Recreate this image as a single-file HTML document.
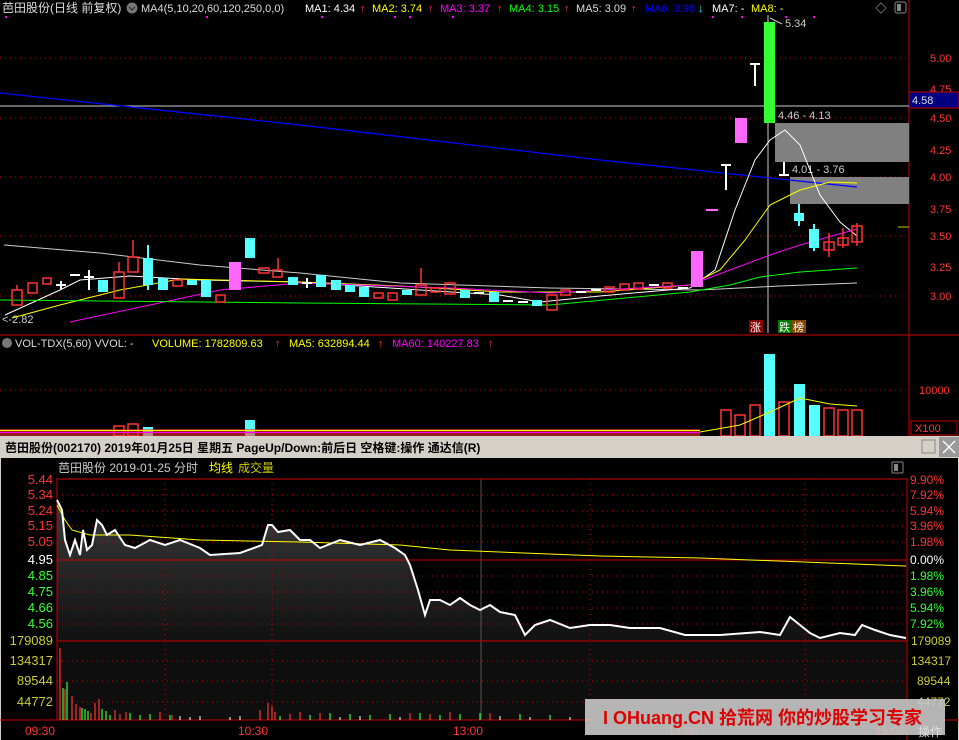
<!DOCTYPE html>
<html><head><meta charset="utf-8"><style>
body{margin:0;background:#000;width:959px;height:740px;overflow:hidden;font-family:"Liberation Sans","Noto Sans CJK SC",sans-serif}
svg{position:absolute;left:0;top:0}
</style></head><body>
<svg width="959" height="740" viewBox="0 0 959 740" font-family="Liberation Sans, Noto Sans CJK SC, sans-serif">
<rect width="959" height="740" fill="#000"/>
<text x="2" y="12" font-size="12" fill="#ddd">芭田股份(日线 前复权)</text>
<circle cx="132" cy="8" r="5.5" fill="#777"/><path d="M129 7l3 3 3-3" stroke="#222" fill="none"/>
<text x="141" y="12" font-size="11" fill="#ddd">MA4(5,10,20,60,120,250,0,0)</text>
<text x="305" y="12" font-size="11" fill="#fff">MA1: 4.34</text><text x="360" y="12" font-size="11" fill="#f33">↑</text>
<text x="372" y="12" font-size="11" fill="#ff0">MA2: 3.74</text><text x="428" y="12" font-size="11" fill="#f33">↑</text>
<text x="440" y="12" font-size="11" fill="#f0f">MA3: 3.37</text><text x="497" y="12" font-size="11" fill="#f33">↑</text>
<text x="509" y="12" font-size="11" fill="#0f0">MA4: 3.15</text><text x="564" y="12" font-size="11" fill="#f33">↑</text>
<text x="576" y="12" font-size="11" fill="#ddd">MA5: 3.09</text><text x="631" y="12" font-size="11" fill="#f33">↑</text>
<text x="645" y="12" font-size="11" fill="#00f">MA6: 3.98</text><text x="698" y="12" font-size="11" fill="#0ff">↓</text>
<text x="712" y="12" font-size="11" fill="#fff">MA7: -</text>
<text x="751" y="12" font-size="11" fill="#ff0">MA8: -</text>
<path d="M881 3l5 5-5 5-5-5z" stroke="#666" fill="none"/><rect x="895" y="2" width="11" height="11" rx="2" stroke="#888" fill="none"/><rect x="897" y="4" width="4" height="7" fill="#888"/>
<g fill="#f0f"><rect x="5" y="16" width="2" height="2"/><rect x="206" y="16" width="2" height="2"/><rect x="321" y="16" width="2" height="2"/><rect x="394" y="16" width="2" height="2"/><rect x="409" y="16" width="2" height="2"/><rect x="452" y="16" width="2" height="2"/><rect x="712" y="16" width="2" height="2"/><rect x="741" y="16" width="2" height="2"/><rect x="785" y="16" width="2" height="2"/><rect x="813" y="16" width="2" height="2"/></g>
<g stroke="#c00" stroke-dasharray="1,4"><line x1="0" y1="58" x2="909" y2="58"/><line x1="0" y1="118" x2="909" y2="118"/><line x1="0" y1="177" x2="909" y2="177"/><line x1="0" y1="236" x2="909" y2="236"/><line x1="0" y1="296" x2="909" y2="296"/><line x1="0" y1="390" x2="909" y2="390"/></g>
<line x1="909" y1="0" x2="909" y2="436" stroke="#c00"/>
<line x1="0" y1="335" x2="959" y2="335" stroke="#c00"/>
<g font-size="11" fill="#f33"><text x="930" y="62">5.00</text><text x="930" y="93">4.75</text><text x="930" y="122">4.50</text><text x="930" y="154">4.25</text><text x="930" y="181">4.00</text><text x="930" y="213">3.75</text><text x="930" y="240">3.50</text><text x="930" y="271">3.25</text><text x="930" y="300">3.00</text></g>
<rect x="909" y="92" width="50" height="16" fill="#000080" stroke="#c00"/><text x="912" y="104" font-size="11" fill="#ddd">4.58</text>
<line x1="0" y1="106" x2="909" y2="106" stroke="#ccc"/>
<line x1="768" y1="15" x2="768" y2="333" stroke="#ccc"/>
<rect x="775" y="123" width="134" height="39" fill="#808080"/><rect x="790" y="177" width="119" height="27" fill="#808080"/>
<text x="778" y="119" font-size="11" fill="#ccc">4.46 - 4.13</text><text x="792" y="173" font-size="11" fill="#ccc">4.01 - 3.76</text>
<text x="785" y="27" font-size="11" fill="#ccc">5.34</text><path d="M770 18l12 6" stroke="#ccc"/>
<text x="2" y="323" font-size="11" fill="#ccc">&lt;-2.82</text>
<polyline fill="none" stroke="#00f" stroke-width="1.3" points="0,93 300,125 600,160 770,178 857,187"/>
<polyline fill="none" stroke="#ccc" points="4,245 100,253 200,265 300,273 400,283 550,288 700,290 780,286 857,283"/>
<polyline fill="none" stroke="#fff" points="5,315 60,290 80,280 130,276 200,280 300,282 420,290 500,295 540,302 600,296 690,288 715,270 735,210 755,160 770,140 785,130 800,145 820,195 840,222 857,236"/>
<polyline fill="none" stroke="#ff0" points="12,318 60,305 120,290 180,279 300,282 400,286 500,292 600,292 690,285 720,270 745,240 770,205 800,190 830,182 857,183"/>
<polyline fill="none" stroke="#f0f" points="70,322 150,305 220,290 300,283 450,288 550,293 690,285 730,270 770,255 800,245 857,229"/>
<polyline fill="none" stroke="#0f0" points="0,300 300,303 550,305 690,292 730,285 760,277 800,272 857,268"/>
<g stroke="#f33" fill="none" stroke-width="1.5">
<rect x="12" y="290" width="10" height="15"/><line x1="17" y1="285" x2="17" y2="290"/>
<rect x="28" y="283" width="9" height="10"/><rect x="43" y="278" width="8" height="6"/>
<rect x="114" y="272" width="10" height="26"/><line x1="119" y1="262" x2="119" y2="272"/>
<rect x="128" y="257" width="10" height="15"/><line x1="133" y1="240" x2="133" y2="257"/>
<rect x="173" y="280" width="9" height="6"/><rect x="216" y="295" width="9" height="7"/>
<rect x="259" y="268" width="10" height="5"/><rect x="273" y="270" width="9" height="7"/><line x1="278" y1="258" x2="278" y2="270"/>
<rect x="374" y="293" width="9" height="5"/><rect x="388" y="293" width="9" height="7"/>
<rect x="416" y="285" width="10" height="10"/><line x1="421" y1="268" x2="421" y2="285"/>
<rect x="431" y="288" width="9" height="4"/><rect x="445" y="283" width="10" height="11"/>
<rect x="547" y="295" width="10" height="15"/><rect x="561" y="290" width="9" height="5"/>
<rect x="605" y="287" width="9" height="5"/><rect x="620" y="284" width="9" height="6"/><rect x="634" y="283" width="9" height="6"/><rect x="663" y="283" width="9" height="5"/>
<rect x="824" y="242" width="10" height="8"/><line x1="829" y1="233" x2="829" y2="257"/>
<rect x="838" y="238" width="10" height="7"/><line x1="843" y1="228" x2="843" y2="248"/>
<rect x="852" y="226" width="10" height="16"/><line x1="857" y1="223" x2="857" y2="246"/>
</g>
<g fill="#5ff"><rect x="98" y="280" width="10" height="12"/><rect x="143" y="258" width="10" height="27"/><rect x="147" y="245" width="2" height="45"/><rect x="158" y="278" width="10" height="12"/><rect x="187" y="280" width="10" height="5"/><rect x="201" y="280" width="10" height="17"/><rect x="245" y="238" width="10" height="20"/><rect x="288" y="277" width="10" height="8"/><rect x="316" y="275" width="10" height="12"/><rect x="331" y="280" width="10" height="10"/><rect x="345" y="285" width="10" height="7"/><rect x="359" y="287" width="10" height="10"/><rect x="402" y="290" width="10" height="5"/><rect x="460" y="290" width="10" height="8"/><rect x="489" y="292" width="10" height="10"/><rect x="532" y="300" width="10" height="6"/><rect x="794" y="213" width="10" height="8"/><rect x="798" y="204" width="2" height="22"/><rect x="809" y="229" width="10" height="19"/><rect x="813" y="224" width="2" height="27"/></g>
<g fill="#f6f"><rect x="229" y="262" width="12" height="28"/><rect x="691" y="251" width="12" height="36"/><rect x="735" y="118" width="12" height="25"/><rect x="706" y="209" width="12" height="2"/></g>
<g stroke="#fff" stroke-width="2"><path d="M56 285h10M61 281v8M70 275h10M84 277h10M89 270v20M302 283h10M307 278v10M474 293h10M503 301h10M518 302h10M576 292h10M591 290h10M649 285h10M678 288h10M721 165h10M726 165v25M750 64h10M755 64v22M779 175h10M784 162v13"/></g>
<rect x="764" y="22" width="11" height="101" fill="#3f3"/>
<rect x="749" y="320" width="14" height="13" fill="#800"/><text x="750" y="331" font-size="11" fill="#fff">涨</text>
<rect x="778" y="320" width="14" height="13" fill="#070"/><text x="779" y="331" font-size="11" fill="#fff">跌</text>
<rect x="792" y="320" width="14" height="13" fill="#840"/><text x="793" y="331" font-size="11" fill="#fff">榜</text>
<line x1="898" y1="227" x2="909" y2="227" stroke="#cc0"/>
<circle cx="7" cy="343" r="5" fill="#777"/>
<text x="15" y="347" font-size="11" fill="#ddd">VOL-TDX(5,60)  VVOL: -</text>
<text x="152" y="347" font-size="11" fill="#ff0">VOLUME: 1782809.63</text><text x="275" y="347" font-size="11" fill="#f33">↑</text>
<text x="289" y="347" font-size="11" fill="#ff0">MA5: 632894.44</text><text x="378" y="347" font-size="11" fill="#f33">↑</text>
<text x="392" y="347" font-size="11" fill="#f0f">MA60: 140227.83</text><text x="488" y="347" font-size="11" fill="#f33">↑</text>
<text x="919" y="394" font-size="11" fill="#f33">10000</text>
<rect x="911" y="421" width="46" height="14" fill="none" stroke="#c00"/><text x="915" y="432" font-size="11" fill="#f33">X100</text>
<g fill="#5ff"><rect x="764" y="354" width="11" height="82"/><rect x="794" y="384" width="11" height="52"/><rect x="809" y="405" width="11" height="31"/><rect x="245" y="420" width="10" height="16"/><rect x="143" y="427" width="10" height="9"/></g>
<g stroke="#f33" fill="none" stroke-width="1.5"><rect x="721" y="410" width="10" height="26"/><rect x="735" y="415" width="10" height="21"/><rect x="750" y="405" width="10" height="31"/><rect x="779" y="402" width="10" height="34"/><rect x="824" y="408" width="10" height="28"/><rect x="838" y="410" width="10" height="26"/><rect x="852" y="410" width="10" height="26"/><rect x="114" y="426" width="10" height="10"/><rect x="128" y="424" width="10" height="12"/></g>
<rect x="0" y="429" width="700" height="7" fill="#f33" opacity=".6"/>
<rect x="0" y="430" width="700" height="1" fill="#ff0"/><rect x="0" y="432" width="700" height="1" fill="#f0f"/>
<polyline fill="none" stroke="#ff0" points="700,432 740,425 770,412 800,398 830,404 857,406"/>
<rect x="0" y="436" width="959" height="304" fill="#d4d0c8"/>
<text x="5" y="452" font-size="12" font-weight="bold" fill="#000">芭田股份(002170)  2019年01月25日  星期五  PageUp/Down:前后日  空格键:操作  通达信(R)</text>
<rect x="922" y="440" width="13" height="13" fill="none" stroke="#888"/>
<rect x="939" y="437" width="20" height="20" fill="#999"/><path d="M943 441l12 12M955 441l-12 12" stroke="#fff" stroke-width="1.3"/>
<rect x="1" y="458" width="957" height="282" fill="#000"/>
<text x="58" y="472" font-size="12" fill="#ccc">芭田股份   2019-01-25 分时</text><text x="209" y="472" font-size="12" fill="#ff0">均线</text><text x="238" y="472" font-size="12" fill="#cc0">成交量</text>
<rect x="892" y="462" width="11" height="11" rx="1" fill="none" stroke="#888"/><rect x="894" y="464" width="4" height="7" fill="#888"/>
<defs><linearGradient id="g" x1="0" y1="0" x2="0" y2="1"><stop offset="0" stop-color="#3a3a3a"/><stop offset="1" stop-color="#111"/></linearGradient></defs>
<rect x="57" y="641" width="850" height="79" fill="#0e0e0e"/>
<polygon fill="url(#g)" points="57,500 62,510 65,540 70,555 75,540 80,555 83,530 87,550 92,545 97,520 102,525 107,535 115,530 125,545 135,548 150,540 165,545 180,540 200,548 210,555 240,553 262,545 268,525 272,525 278,532 290,530 300,540 310,540 320,548 340,540 360,545 380,540 395,548 405,555 410,565 418,590 425,615 430,600 440,600 450,605 460,598 470,605 480,610 490,605 500,612 515,615 525,635 535,625 550,620 570,628 590,625 610,625 630,628 660,628 685,635 720,635 760,632 780,635 790,617 800,625 810,633 820,638 840,633 855,635 862,625 875,630 890,635 906,638 906,641 57,641"/>
<g stroke="#c00" stroke-dasharray="1,4"><line x1="57" y1="495" x2="907" y2="495"/><line x1="57" y1="511" x2="907" y2="511"/><line x1="57" y1="526" x2="907" y2="526"/><line x1="57" y1="542" x2="907" y2="542"/><line x1="57" y1="576" x2="907" y2="576"/><line x1="57" y1="592" x2="907" y2="592"/><line x1="57" y1="608" x2="907" y2="608"/><line x1="57" y1="624" x2="907" y2="624"/><line x1="57" y1="661" x2="907" y2="661"/><line x1="57" y1="681" x2="907" y2="681"/><line x1="57" y1="702" x2="907" y2="702"/><line x1="165" y1="479" x2="165" y2="720"/><line x1="272" y1="479" x2="272" y2="720"/><line x1="590" y1="479" x2="590" y2="720"/><line x1="805" y1="479" x2="805" y2="720"/></g>
<line x1="481" y1="479" x2="481" y2="720" stroke="#555"/>
<g stroke="#c00"><rect x="57" y="479" width="850" height="241" fill="none"/><line x1="57" y1="560" x2="907" y2="560"/><line x1="57" y1="641" x2="907" y2="641"/><line x1="0" y1="720" x2="959" y2="720"/></g>
<polyline fill="none" stroke="#ff0" points="57,505 65,520 72,530 90,535 130,535 200,540 300,542 400,545 450,550 600,556 700,558 906,566"/>
<polyline fill="none" stroke="#fff" stroke-width="2" points="57,500 62,510 65,540 70,555 75,540 80,555 83,530 87,550 92,545 97,520 102,525 107,535 115,530 125,545 135,548 150,540 165,545 180,540 200,548 210,555 240,553 262,545 268,525 272,525 278,532 290,530 300,540 310,540 320,548 340,540 360,545 380,540 395,548 405,555 410,565 418,590 425,615 430,600 440,600 450,605 460,598 470,605 480,610 490,605 500,612 515,615 525,635 535,625 550,620 570,628 590,625 610,625 630,628 660,628 685,635 720,635 760,632 780,635 790,617 800,625 810,633 820,638 840,633 855,635 862,625 875,630 890,635 906,638"/>
<g font-size="13" text-anchor="end">
<g fill="#f33"><text x="53" y="484">5.44</text><text x="53" y="499">5.34</text><text x="53" y="515">5.24</text><text x="53" y="530">5.15</text><text x="53" y="546">5.05</text></g>
<text x="53" y="564" fill="#fff">4.95</text>
<g fill="#3f3"><text x="53" y="580">4.85</text><text x="53" y="596">4.75</text><text x="53" y="612">4.66</text><text x="53" y="628">4.56</text></g>
<g fill="#cc3"><text x="53" y="645">179089</text><text x="53" y="665">134317</text><text x="53" y="685">89544</text><text x="53" y="706">44772</text></g>
</g>
<g font-size="12" fill="#f33"><text x="910" y="484">9.90%</text><text x="910" y="499">7.92%</text><text x="910" y="515">5.94%</text><text x="910" y="530">3.96%</text><text x="910" y="546">1.98%</text></g>
<text x="910" y="564" font-size="12" fill="#fff">0.00%</text>
<g font-size="12" fill="#3f3"><text x="910" y="580">1.98%</text><text x="910" y="596">3.96%</text><text x="910" y="612">5.94%</text><text x="910" y="628">7.92%</text></g>
<g font-size="12" fill="#cc3"><text x="911" y="645">179089</text><text x="911" y="665">134317</text><text x="917" y="685">89544</text><text x="917" y="706">44772</text></g>
<g stroke-width="1.2"><path stroke="#f33" d="M60 720V648M65 720V689M72 720V696M76 720V704M80 720V707M91 720V713M95 720V703M99 720V699M115 720V710M120 720V714M126 720V712M160 720V712M172 720V715M260 720V710M268 720V703M272 720V706M275 720V712M290 720V714M300 720V712M320 720V713M410 720V713M430 720V714M450 720V712M490 720V713"/><path stroke="#3f3" d="M63 720V688M67 720V682M82 720V708M85 720V709M88 720V711M102 720V709M106 720V711M110 720V715M130 720V713M140 720V715M150 720V714M170 720V715M280 720V716M310 720V715M330 720V713M350 720V714M370 720V715M390 720V714M420 720V713M440 720V715M460 720V714M480 720V713M520 720V714M550 720V715"/><path stroke="#ddd" d="M180 720V716M190 720V717M200 720V716M230 720V717M240 720V716M340 720V717M360 720V716M400 720V717M500 720V716M530 720V717M570 720V717"/></g>
<g font-size="12" fill="#f33"><text x="25" y="735">09:30</text><text x="238" y="735">10:30</text><text x="453" y="735">13:00</text><text x="668" y="735">14:00</text><text x="875" y="735">15:00</text></g>
<line x1="907" y1="479" x2="907" y2="740" stroke="#c00"/>
<rect x="585" y="699" width="360" height="36" fill="#c8c8c8" opacity=".9"/>
<text x="603" y="724" font-size="18" font-weight="bold" fill="#d00">I OHuang.CN 拾荒网 你的炒股学习专家</text>
<text x="918" y="736" font-size="12" fill="#ddd">操作</text>
</svg>
</body></html>
